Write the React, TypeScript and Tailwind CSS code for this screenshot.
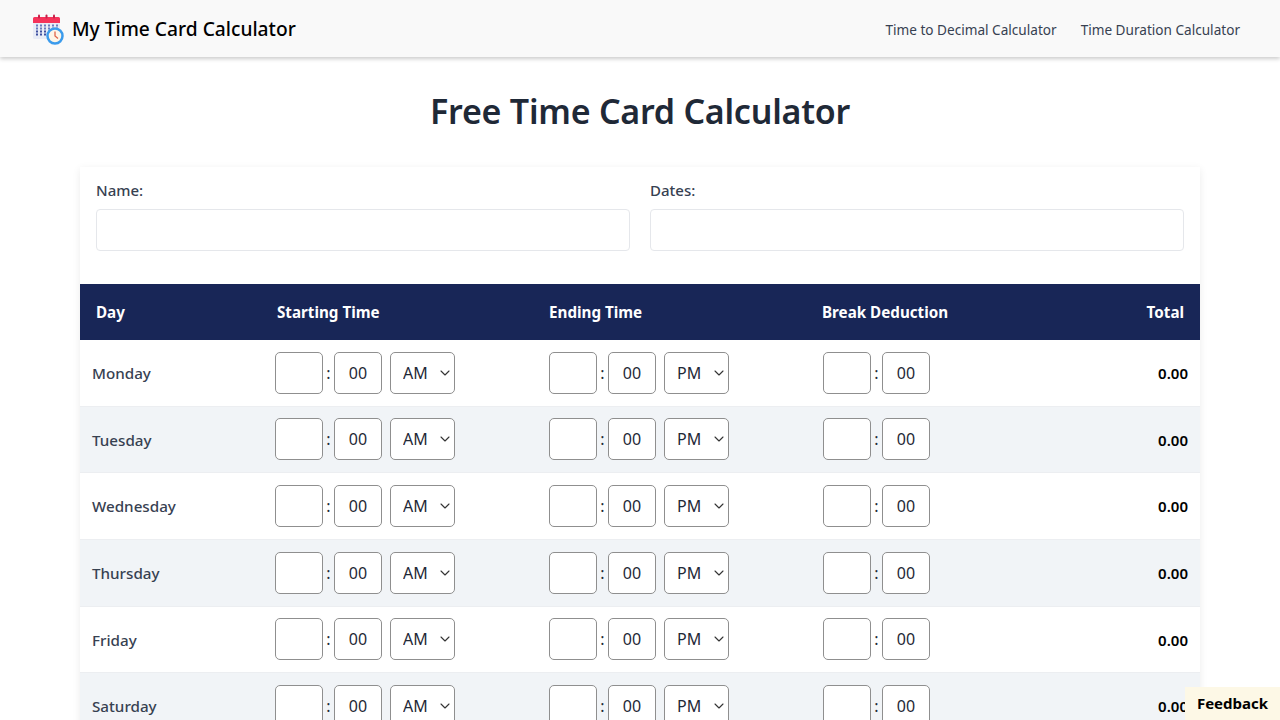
import React from 'react';
import { ChevronDown } from 'lucide-react';

const days = ['Monday', 'Tuesday', 'Wednesday', 'Thursday', 'Friday', 'Saturday'];

const LogoIcon = () => (
  <svg width="32" height="32" viewBox="0 0 32 32" className="shrink-0">
    <rect x="1" y="4" width="27" height="22" rx="1.5" fill="#e8ecf6" />
    <path d="M1 10V5.5A1.5 1.5 0 0 1 2.500 4h24A1.500 1.500 0 0 1 28 5.500V10z" fill="#f5335a" />
    <rect x="6" y="1.500" width="2" height="4" rx="1" fill="#c8224a" />
    <rect x="13.500" y="1.500" width="2" height="4" rx="1" fill="#c8224a" />
    <rect x="21" y="1.500" width="2" height="4" rx="1" fill="#c8224a" />
    {[12.500, 15.500, 18.500, 21.500].map(y =>
      [5, 9, 13, 17, 21, 25].map(x => (
        <rect key={`${x}-${y}`} x={x - 1} y={y - 1} width="2" height="2" fill={x < 14 && y > 16 ? '#3d4f9f' : '#6a7bbd'} />
      ))
    )}
    <circle cx="23" cy="23" r="7.500" fill="#fdf6e8" stroke="#3b9bec" strokeWidth="2.500" />
    <path d="M23 18.500V23l3 2.500" fill="none" stroke="#e0654a" strokeWidth="1.300" />
  </svg>
);

const TimeInput = ({ value }: { value?: string }) => (
  <input
    type="text"
    defaultValue={value}
    className="w-12 h-[42px] rounded-[5px] border border-[#8f8f8f] bg-white text-center text-base text-[#1f2937] outline-none"
  />
);

const MeridiemSelect = ({ value }: { value: string }) => (
  <div className="relative ml-2">
    <select
      defaultValue={value}
      className="block w-[65px] h-[42px] appearance-none rounded-[5px] border border-[#8f8f8f] bg-white pl-3 text-base text-[#1f2937] outline-none"
    >
      <option>AM</option>
      <option>PM</option>
    </select>
    <ChevronDown size={16} strokeWidth={1.6} className="pointer-events-none absolute right-[2px] top-[13px] text-[#333]" />
  </div>
);

const Colon = () => <span className="w-[11px] text-center text-base text-[#1f2937]">:</span>;

export default function App() {
  return (
    <div className="h-screen overflow-hidden bg-white font-['Noto_Sans','Open_Sans',sans-serif]">
      <nav className="flex h-[57px] items-center justify-between bg-[#f9f9f9] pl-[32px] pr-10 shadow-[0_2px_4px_rgba(0,0,0,0.2)]">
        <div className="flex items-center gap-[8px]">
          <LogoIcon />
          <span className="pt-0.5 text-[19.2px] font-medium text-black">My Time Card Calculator</span>
        </div>
        <div className="flex items-center gap-6 pt-1 text-[13.6px] text-[#374151]">
          <span>Time to Decimal Calculator</span>
          <span>Time Duration Calculator</span>
        </div>
      </nav>

      <main className="mx-auto w-[1120px]">
        <h1 className="mt-[30px] mb-[31px] text-center text-[34px] leading-[49px] font-semibold tracking-[-0.25px] text-[#1f2937]">
          Free Time Card Calculator
        </h1>

        <div className="bg-white shadow-[0_2px_8px_rgba(0,0,0,0.08)]">
          <div className="grid grid-cols-2 gap-5 px-4 pt-3 pb-[33px]">
            {['Name:', 'Dates:'].map(label => (
              <div key={label}>
                <label className="mb-2 block text-[15px] leading-[22px] font-medium text-[#374151]">{label}</label>
                <input type="text" className="block h-[42px] w-full rounded border border-[#e5e7eb] bg-white outline-none" />
              </div>
            ))}
          </div>

          <table className="w-full table-fixed border-collapse">
            <thead>
              <tr className="h-[55.5px] bg-[#182657] text-left text-[15.2px] font-bold text-white">
                <th className="w-[181px] pt-px pl-4">Day</th>
                <th className="w-[272px] pt-px pl-4">Starting Time</th>
                <th className="w-[273px] pt-px pl-4">Ending Time</th>
                <th className="pt-px pl-4">Break Deduction</th>
                <th className="w-[120px] pt-px pr-4 text-right">Total</th>
              </tr>
            </thead>
            <tbody>
              {days.map((day, i) => (
                <tr key={day} className={`h-[66.67px] border-b border-[#eceef1] ${i % 2 === 1 ? 'bg-[#f1f4f7]' : 'bg-white'}`}>
                  <td className="pt-px pl-3 text-[15.2px] font-medium text-[#374151]">{day}</td>
                  <td className="pl-[14px]">
                    <div className="flex items-center">
                      <TimeInput />
                      <Colon />
                      <TimeInput value="00" />
                      <MeridiemSelect value="AM" />
                    </div>
                  </td>
                  <td className="pl-4">
                    <div className="flex items-center">
                      <TimeInput />
                      <Colon />
                      <TimeInput value="00" />
                      <MeridiemSelect value="PM" />
                    </div>
                  </td>
                  <td className="pl-[17px]">
                    <div className="flex items-center">
                      <TimeInput />
                      <Colon />
                      <TimeInput value="00" />
                    </div>
                  </td>
                  <td className="pt-px pr-3 text-right text-[15px] font-semibold text-black">0.00</td>
                </tr>
              ))}
            </tbody>
          </table>
        </div>
      </main>

      <div className="fixed right-0 bottom-0 flex h-[33px] w-[95px] items-center justify-center bg-[#fdf8e6] text-[15px] font-bold text-black">
        Feedback
      </div>
    </div>
  );
}
